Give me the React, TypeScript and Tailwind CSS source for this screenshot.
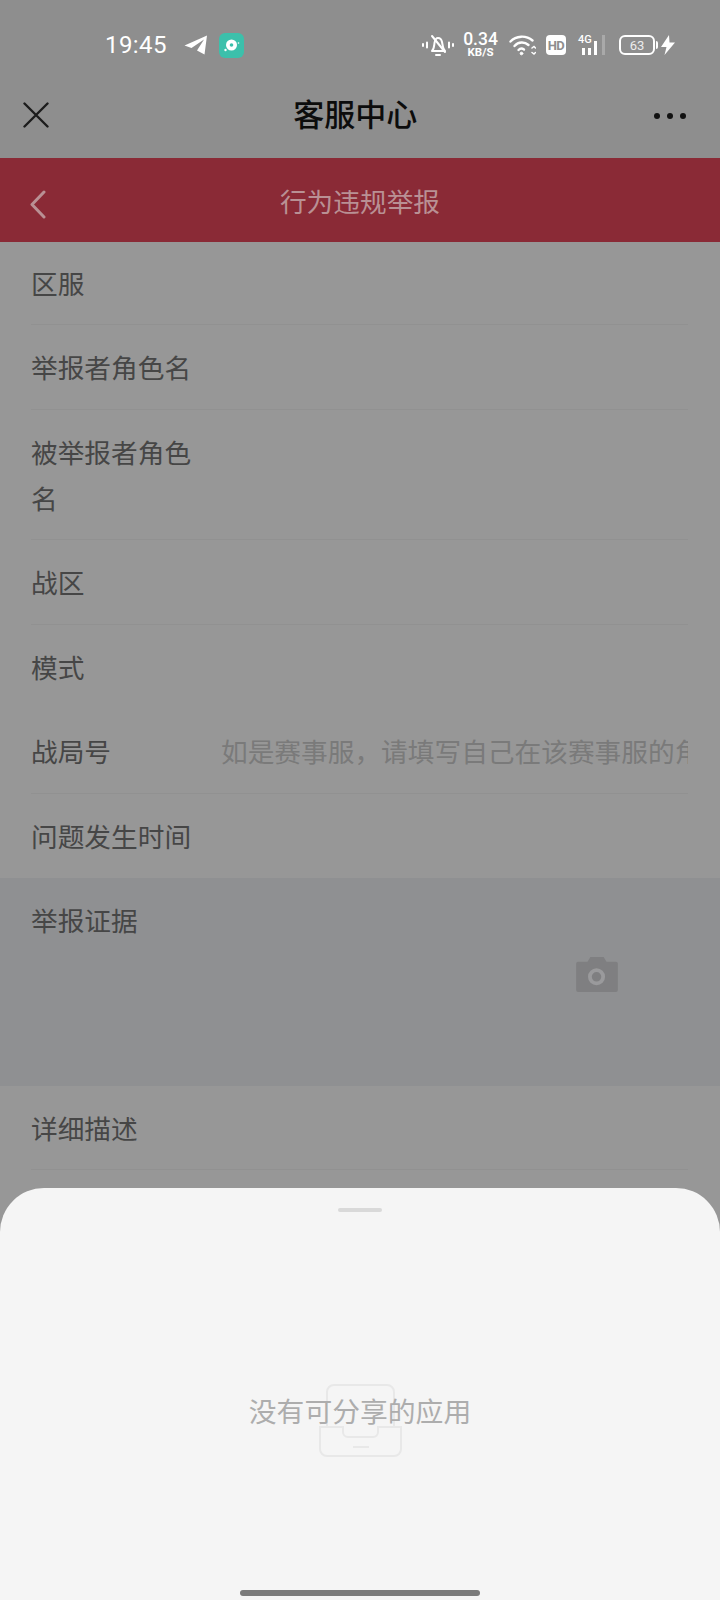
import React from 'react';

const cjk = "font-['Noto_Sans_CJK_SC','Noto_Sans',sans-serif]";

const StatusBar: React.FC = () => {
  return (
    <div className="h-[80px] flex items-center pl-[105px] pr-[45px] pt-[10px] text-white font-['Roboto',sans-serif]">
      <span className="text-[24px] leading-none tracking-[0.4px] w-[80px]">19:45</span>
      {/* telegram */}
      <svg width="24" height="20" viewBox="0 0 24 20" className="ml-[-1px]">
        <path d="M0.5 10.5 L23 0.5 L20.5 19.5 L13 15.5 L20 4.5 L7.5 13 Z" fill="#fff" />
      </svg>
      {/* music app */}
      <div className="ml-[11px] w-[25px] h-[25px] rounded-[6px] bg-[#3cc0ab] flex items-center justify-center">
        <svg width="17" height="17" viewBox="0 0 17 17">
          <circle cx="8.5" cy="8" r="5.5" fill="#fff" />
          <circle cx="8.5" cy="8" r="1.8" fill="#3cc0ab" />
          <circle cx="2.5" cy="13" r="1.2" fill="#fff" />
          <circle cx="15.5" cy="6" r="0.8" fill="#fff" />
        </svg>
      </div>
      <div className="flex-1" />
      {/* muted bell */}
      <svg width="32" height="24" viewBox="0 0 32 24" fill="none" stroke="#fff" strokeWidth="2" strokeLinecap="round" strokeLinejoin="round">
        <path d="M1 11v2M5 9.5v5M27 9.5v5M31 11v2" />
        <path d="M10 18c2-2 2-4 2.500-8c.5-3 2-5 3.500-5s3.500 1.500 4 4l1 5c.3 2 1.500 3 2 4Z" />
        <path d="M14 22h4M10 3l13 16" />
      </svg>
      <div className="ml-[10px] w-[33px] flex flex-col items-center leading-none font-medium">
        <span className="text-[17.500px] leading-[15px]">0.34</span>
        <span className="text-[11.500px] leading-[11px] font-bold">KB/S</span>
      </div>
      {/* wifi */}
      <svg width="27" height="22" viewBox="0 0 27 22" fill="none" stroke="#fff" strokeWidth="2.4" strokeLinecap="round" className="ml-[12px]">
        <path d="M1.500 7.500C7 1.500 17 1 23.500 6.500" />
        <path d="M5.500 12C9.500 7.500 15.500 7.500 19.500 11" />
        <path d="M9.500 16C11 14.500 13.500 14.500 15 15.500" />
        <circle cx="12.500" cy="19.500" r="1.300" fill="#fff" strokeWidth="1" />
        <path d="M23 14l2-1.500 1.500 1.500M23 18.500l2 1.500 1.500-1.500" strokeWidth="1.500" />
      </svg>
      <div className="ml-[10px] w-[20px] h-[20px] rounded-[4px] bg-white flex items-center justify-center text-[#8e8e8e] text-[13px] font-bold leading-none tracking-[-0.5px]">
        HD
      </div>
      {/* 4G signal */}
      <div className="ml-[12px] relative w-[28px] h-[20px] flex items-end gap-[3px] pl-[4px]">
        <span className="absolute left-0 top-[-1px] text-[11px] leading-none font-medium">4G</span>
        <span className="w-[3px] h-[7px] bg-white" />
        <span className="w-[3px] h-[7px] bg-white" />
        <span className="w-[3px] h-[14px] bg-white" />
        <span className="w-[3px] h-[20px] bg-[#a9a9a9] ml-[2px]" />
      </div>
      {/* battery */}
      <div className="ml-[13px] w-[36px] h-[20px] rounded-[6px] border-2 border-white flex items-center justify-center text-[13px] leading-none text-[#ececec]">
        63
      </div>
      <span className="ml-[1px] w-[2px] h-[8px] rounded-r-[2px] bg-white" />
      <svg width="14" height="20" viewBox="0 0 14 20" className="ml-[3px]">
        <path d="M8 0 L0 12 H5.500 L3.500 20 L14 7.500 H8.500 Z" fill="#fff" />
      </svg>
    </div>
  );
};

const Row: React.FC<{ label: string; height: string; placeholder?: string; plain?: boolean }> = ({ label, height, placeholder, plain }) => {
  return (
    <div className={`ml-[31px] mr-[32px] flex items-center ${plain ? '' : 'border-b border-[#919191]'} ${height}`}>
      <div className="w-[161px] shrink-0 text-[26.700px] leading-[46px] text-[#464646]">{label}</div>
      {placeholder && (
        <div className="ml-[29px] flex-1 overflow-hidden whitespace-nowrap text-[26.700px] leading-[46px] text-[#7a7a7a]">
          {placeholder}
        </div>
      )}
    </div>
  );
};

const App: React.FC = () => {
  return (
    <div className={`relative w-[720px] h-[1600px] overflow-hidden bg-[#979797] ${cjk}`}>
      <div className="bg-[#8e8e8e]">
        <StatusBar />
        <div className="h-[78px] flex items-center justify-between pl-[23px] pr-[34px]">
          <svg width="26" height="26" viewBox="0 0 26 26" fill="none" stroke="#1c1c1c" strokeWidth="2.400" strokeLinecap="round" className="mb-[8px]">
            <path d="M1.500 1.500L24.500 24.500M24.500 1.500L1.500 24.500" />
          </svg>
          <div className="text-[31px] leading-none font-medium text-[#0c0c0c] mb-[14px] ml-[8px]">客服中心</div>
          <div className="flex gap-[6.500px] mb-[6px]">
            <span className="w-[6.500px] h-[6.500px] rounded-full bg-[#111]" />
            <span className="w-[6.500px] h-[6.500px] rounded-full bg-[#111]" />
            <span className="w-[6.500px] h-[6.500px] rounded-full bg-[#111]" />
          </div>
        </div>
      </div>

      <div className="relative h-[84px] bg-[#8a2a36] flex items-center justify-center pt-[2px]">
        <svg width="18" height="30" viewBox="0 0 18 30" fill="none" stroke="#b99094" strokeWidth="3" strokeLinecap="round" strokeLinejoin="round" className="absolute left-[29px] top-[32px]">
          <path d="M15 2L3 14.500L15 27" />
        </svg>
        <span className="text-[26.700px] leading-none text-[#b99094]">行为违规举报</span>
      </div>

      <Row label="区服" height="h-[83px]" />
      <Row label="举报者角色名" height="h-[85px]" />
      <Row label="被举报者角色名" height="h-[130px]" />
      <Row label="战区" height="h-[85px]" />
      <Row label="模式" height="h-[84px]" plain />
      <Row label="战局号" height="h-[85px]" placeholder="如是赛事服，请填写自己在该赛事服的角色名" />
      <div className="ml-[31px] flex items-center h-[84px] text-[26.700px] leading-[46px] text-[#464646]">问题发生时间</div>

      <div className="h-[208px] bg-[#8f9092] pl-[31px] pt-[19px] flex">
        <div className="text-[26.700px] leading-[46px] text-[#464646]">举报证据</div>
        <svg width="42" height="36" viewBox="0 0 44 38" className="ml-[438px] mt-[59px]">
          <path d="M2 6h10l3-5h14l3 5h10a2 2 0 0 1 2 2v28a2 2 0 0 1-2 2H2a2 2 0 0 1-2-2V8a2 2 0 0 1 2-2Z" fill="#7f7f81" />
          <circle cx="21.500" cy="22" r="7" fill="#7f7f81" stroke="#9a9a9c" strokeWidth="4" />
        </svg>
      </div>

      <Row label="详细描述" height="h-[84px]" />

      {/* share sheet */}
      <div className="absolute left-0 right-0 top-[1188px] bottom-0 bg-[#f5f5f5] rounded-t-[44px] flex flex-col items-center">
        <div className="mt-[20px] w-[44px] h-[4px] rounded-full bg-[#d9d9d9]" />
        <div className="relative mt-[165px] w-[222px] h-[100px] flex justify-center">
          <svg width="83" height="73" viewBox="0 0 83 73" fill="none" stroke="#e8e8e8" strokeWidth="2" className="absolute top-[7px]">
            <path d="M8 43V8a7 7 0 0 1 7-7h53a7 7 0 0 1 7 7v35" />
            <path d="M1 43h23v5a5 5 0 0 0 5 5h25a5 5 0 0 0 5-5v-5h23v22a7 7 0 0 1-7 7H8a7 7 0 0 1-7-7Z" />
            <path d="M34 63h16" />
          </svg>
          <span className="absolute top-[13px] left-[-4px] right-[-4px] text-center text-[27.800px] leading-[40px] text-[#adadad] whitespace-nowrap">没有可分享的应用</span>
        </div>
        <div className="absolute bottom-[4px] w-[240px] h-[6px] rounded-full bg-[#7b7b7b]" />
      </div>
    </div>
  );
};

export default App;
